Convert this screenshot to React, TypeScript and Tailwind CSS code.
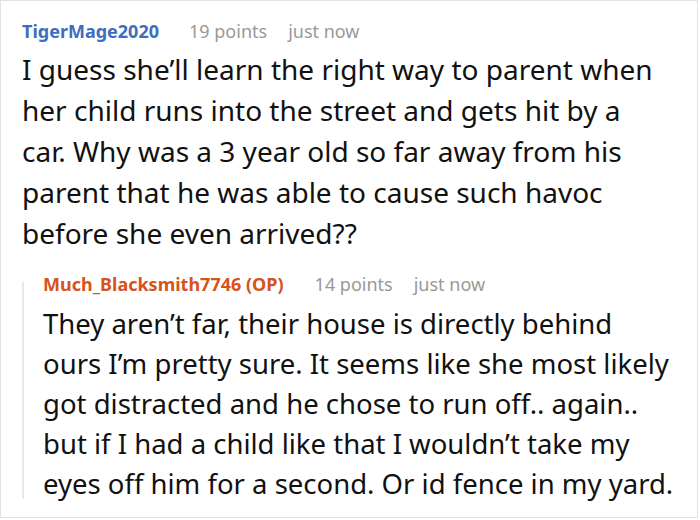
export default function App() {
  return (
    <div className="w-[700px] h-[520px] bg-white font-['Noto_Sans',sans-serif]">
      <div className="w-[698px] h-[518px] border border-[#e2e2e2] pl-[21px] pt-[17px] whitespace-nowrap">
        <div className="flex items-baseline leading-[26px]">
          <span className="text-[18px] font-bold text-[#3c6fbd]">TigerMage2020</span>
          <span className="ml-[30px] text-[18px] text-[#999999]">19 points</span>
          <span className="ml-[21px] text-[18px] text-[#999999]">just now</span>
        </div>
        <p className="text-[28px] leading-[41px] text-[#111111] mt-[5px]">
          I guess she’ll learn the right way to parent when<br />
          her child runs into the street and gets hit by a<br />
          car. Why was a 3 year old so far away from his<br />
          parent that he was able to cause such havoc<br />
          before she even arrived??
        </p>
        <div className="flex mt-[17px]">
          <div className="w-[2px] bg-[#e8e8e8] mt-[11px] mb-[5px]" />
          <div className="pl-[19px]">
            <div className="flex items-baseline leading-[26px]">
              <span className="text-[18px] font-bold text-[#d4541c]">Much_Blacksmith7746 (OP)</span>
              <span className="ml-[31px] text-[18px] text-[#999999]">14 points</span>
              <span className="ml-[21px] text-[18px] text-[#999999]">just now</span>
            </div>
            <p className="text-[27.5px] leading-[40px] text-[#111111] mt-[7px]">
              They aren’t far, their house is directly behind<br />
              ours I’m pretty sure. It seems like she most likely<br />
              got distracted and he chose to run off.. again..<br />
              but if I had a child like that I wouldn’t take my<br />
              eyes off him for a second. Or id fence in my yard.
            </p>
          </div>
        </div>
      </div>
    </div>
  )
}
